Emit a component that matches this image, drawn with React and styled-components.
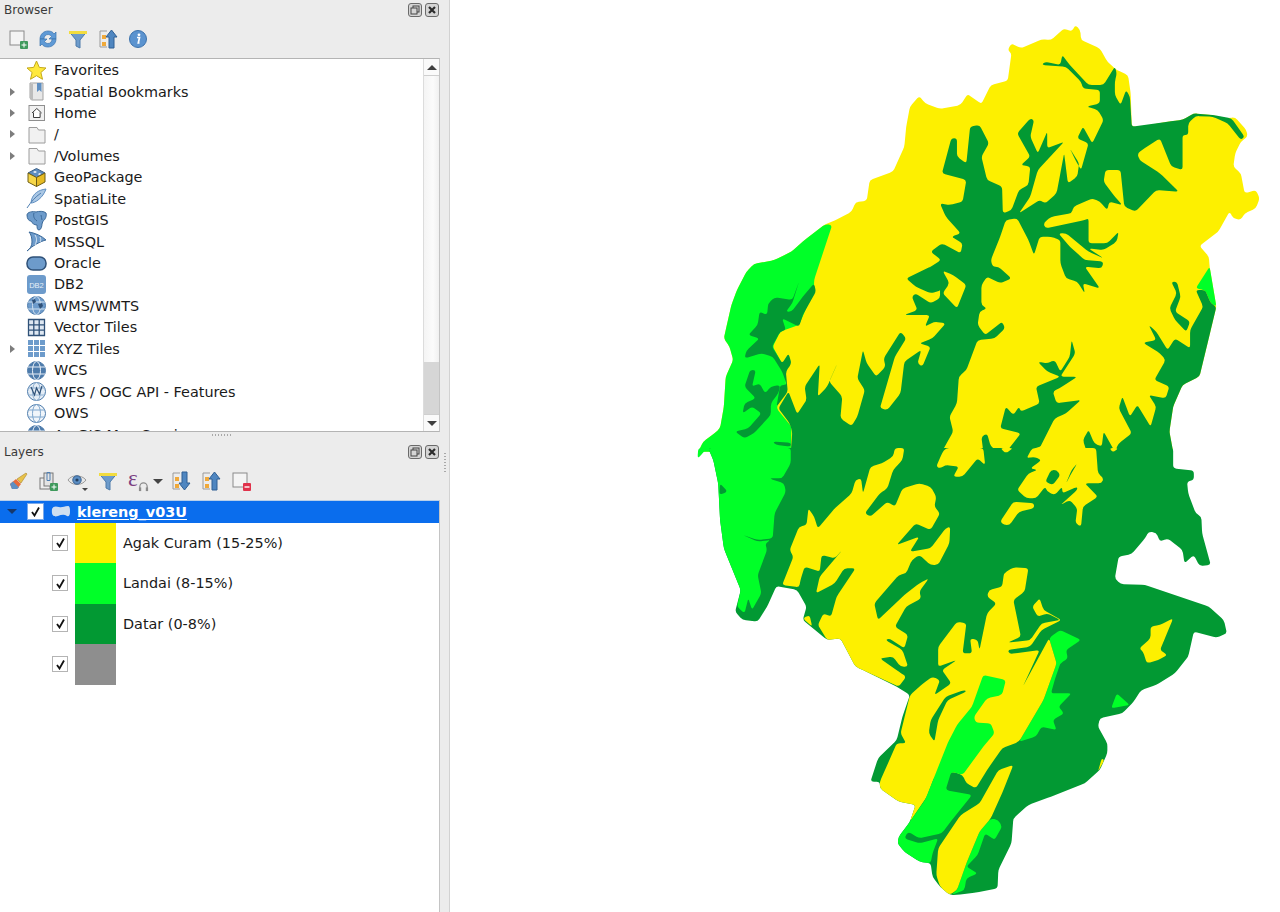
import React from "react";
import styled, { createGlobalStyle } from "styled-components";

const GlobalStyle = createGlobalStyle`
  html, body { margin: 0; padding: 0; background: #fff; }
  body { font-family: "DejaVu Sans", "Liberation Sans", sans-serif; color: #1c1c1c; }
`;

const YELLOW = "#fdf000";
const LIGHT = "#00ff28";
const DARK = "#029933";

/* ---------- layout ---------- */
const Page = styled.div`
  display: flex;
  width: 1280px;
  height: 912px;
  overflow: hidden;
`;

const Sidebar = styled.aside`
  position: relative;
  width: 449px;
  flex: none;
  display: flex;
  flex-direction: column;
  background: #ececec;
  border-right: 1px solid #d2d2d2;
`;

const Canvas = styled.main`
  flex: 1;
  background: #fff;
`;

const MapSvg = styled.svg`
  display: block;
  width: 830px;
  height: 912px;
`;

const TitleBar = styled.div`
  height: ${(p) => p.$h}px;
  padding-top: ${(p) => p.$top}px;
  box-sizing: border-box;
  display: flex;
  align-items: center;
  justify-content: space-between;
  padding-left: 4px;
  padding-right: 10px;
`;

const TitleText = styled.span`
  font-size: 12px;
  color: #3a3a3a;
`;

const DockButtons = styled.div`
  display: flex;
  gap: 3px;
`;

const DockButton = styled.svg`
  display: block;
  width: 14px;
  height: 14px;
`;

const Toolbar = styled.div`
  height: ${(p) => p.$h}px;
  padding-bottom: ${(p) => p.$pb || 0}px;
  box-sizing: border-box;
  display: flex;
  align-items: center;
  padding-left: 7px;
`;

const ToolButton = styled.div`
  width: ${(p) => p.$w || 30}px;
  flex: none;
  display: flex;
  justify-content: ${(p) => (p.$left ? "flex-start" : "center")};
  padding-right: ${(p) => (p.$left ? 0 : 8)}px;
  box-sizing: border-box;
`;

const ToolIcon = styled.svg`
  display: block;
  width: 22px;
  height: 22px;
`;

const EpsilonBox = styled.div`
  position: relative;
  width: 22px;
  height: 22px;
`;

const EpsilonGlyph = styled.span`
  position: absolute;
  left: 1px;
  top: -3px;
  font-size: 23px;
  line-height: 24px;
  color: #7c3f82;
  font-family: "Liberation Serif", serif;
`;

const Headset = styled.svg`
  position: absolute;
  left: 11px;
  top: 11px;
  width: 11px;
  height: 11px;
`;

const DropCaret = styled.div`
  width: 0;
  height: 0;
  border-top: 5px solid #444;
  border-left: 5px solid transparent;
  border-right: 5px solid transparent;
`;

const ListFrame = styled.div`
  position: relative;
  width: 440px;
  height: 374px;
  box-sizing: border-box;
  background: #fff;
  border-top: 1px solid #b4b4b4;
  border-bottom: 1px solid #b4b4b4;
  border-right: 1px solid #c4c4c4;
  display: flex;
`;

const BrowserRows = styled.div`
  flex: 1;
  overflow: hidden;
  padding-top: 0.4px;
`;

const BrowserRow = styled.div`
  height: 21.45px;
  display: flex;
  align-items: center;
  font-size: 14.4px;
  color: #1a1a1a;
  white-space: nowrap;
`;

const ArrowCell = styled.div`
  width: 26px;
  flex: none;
  display: flex;
  justify-content: center;
  padding-right: 2px;
  box-sizing: border-box;
`;

const RightArrow = styled.div`
  width: 0;
  height: 0;
  border-left: 5px solid #7d7d7d;
  border-top: 4.5px solid transparent;
  border-bottom: 4.5px solid transparent;
`;

const DownArrow = styled.div`
  width: 0;
  height: 0;
  border-top: 5px solid #17386b;
  border-left: 5px solid transparent;
  border-right: 5px solid transparent;
`;

const RowIcon = styled.svg`
  display: block;
  width: 21px;
  height: 21px;
  flex: none;
  margin-right: 7px;
`;

const Scrollbar = styled.div`
  width: 16px;
  flex: none;
  display: flex;
  flex-direction: column;
  border-left: 1px solid #dcdcdc;
  box-sizing: border-box;
  background: linear-gradient(90deg, #f4f4f4, #fbfbfb 60%, #f0f0f0);
`;

const ScrollEnd = styled.div`
  height: 17px;
  flex: none;
  display: flex;
  align-items: center;
  justify-content: center;
  background: #fafafa;
  border-${(p) => (p.$up ? "bottom" : "top")}: 1px solid #cfcfcf;
  box-sizing: border-box;
`;

const ArrowUp = styled.div`
  width: 0;
  height: 0;
  border-bottom: 5px solid #3f3f3f;
  border-left: 5px solid transparent;
  border-right: 5px solid transparent;
`;

const ArrowDown = styled.div`
  width: 0;
  height: 0;
  border-top: 5px solid #3f3f3f;
  border-left: 5px solid transparent;
  border-right: 5px solid transparent;
`;

const ScrollTrack = styled.div`
  flex: 1;
`;

const ScrollThumb = styled.div`
  height: 52px;
  flex: none;
  background: #d6d6d6;
`;

const HGrip = styled.div`
  position: absolute;
  left: 211px;
  top: 434px;
  width: 20px;
  height: 2px;
  background: radial-gradient(circle, #a8a8a8 0.8px, transparent 1px) 0 0 / 3px 2px;
`;

const VGrip = styled.div`
  position: absolute;
  left: 444px;
  top: 452px;
  width: 2px;
  height: 21px;
  background: radial-gradient(circle, #a8a8a8 0.8px, transparent 1px) 0 0 / 2px 3px;
`;

const LayerTree = styled.div`
  flex: 1;
  width: 440px;
  box-sizing: border-box;
  background: #fff;
  border-right: 1px solid #c4c4c4;
  border-top: 1px solid #b8cfe9;
`;

const LayerRow = styled.div`
  height: 21.7px;
  display: flex;
  align-items: center;
  background: #0a6ded;
`;

const LayerArrow = styled.div`
  width: 27px;
  flex: none;
  display: flex;
  justify-content: center;
  padding-right: 3px;
  box-sizing: border-box;
`;

const Check = styled.div`
  width: ${(p) => p.$size}px;
  height: ${(p) => p.$size}px;
  flex: none;
  box-sizing: border-box;
  background: #fff;
  border: 1px solid ${(p) => (p.$onBlue ? "#7aa9ea" : "#b4b4b4")};
  display: flex;
  align-items: center;
  justify-content: center;
`;

const CheckMark = styled.svg`
  display: block;
  width: 11px;
  height: 11px;
`;

const LayerShape = styled.svg`
  display: block;
  width: 20px;
  height: 14px;
  margin: 0 6px 0 7px;
  flex: none;
`;

const LayerName = styled.span`
  font-size: 14.4px;
  font-weight: 700;
  color: #fff;
  text-decoration: underline;
  text-underline-offset: 2px;
`;

const LegendRow = styled.div`
  height: 40.5px;
  display: flex;
  align-items: center;
  padding-left: 52px;
`;

const Swatch = styled.div`
  width: 41px;
  height: 100%;
  flex: none;
  margin: 0 7px 0 7px;
  background: ${(p) => p.$color};
`;

const LegendLabel = styled.span`
  font-size: 14.4px;
  color: #1a1a1a;
`;

/* ---------- small drawings ---------- */
const Globe = ({ fill = "#6d9bcb", line = "#fff", children }) => (
  <RowIcon viewBox="0 0 21 21">
    <circle cx="10.5" cy="10.5" r="9" fill={fill} stroke="#4d7bab" />
    <ellipse cx="10.5" cy="10.5" rx="4" ry="9" fill="none" stroke={line} />
    <path d="M2 7h17M2 14h17" stroke={line} fill="none" />
    {children}
  </RowIcon>
);

const Icons = {
  star: (
    <RowIcon viewBox="0 0 21 21">
      <path d="M10.5 1l2.8 6.4 6.7.6-5.1 4.5 1.6 6.8-6-3.6-6 3.6 1.6-6.8L1 8l6.7-.6z" fill="#ffe93b" stroke="#c4a91a" />
    </RowIcon>
  ),
  book: (
    <RowIcon viewBox="0 0 21 21">
      <path d="M4 2h13v17H5.500L4 17z" fill="#e8e8e8" stroke="#a3a3a3" />
      <path d="M4 3h3v16H5L4 17z" fill="#bcbcbc" />
      <path d="M11 2h4.500v9l-2.200-2-2.300 2z" fill="#5f8fc2" />
    </RowIcon>
  ),
  home: (
    <RowIcon viewBox="0 0 21 21">
      <rect x="3" y="3.500" width="15.500" height="15" fill="#f0f0f0" stroke="#8f8f8f" />
      <path d="M6 11l4.800-4.500 4.800 4.500M7.500 10.500V15.500h6.600v-5" fill="#fff" stroke="#3c3c3c" />
    </RowIcon>
  ),
  folder: (
    <RowIcon viewBox="0 0 21 21">
      <path d="M3 3.500h8l1.500 2.500H19v13H3z" fill="#f1f1f1" stroke="#9c9c9c" />
    </RowIcon>
  ),
  geopackage: (
    <RowIcon viewBox="0 0 21 21">
      <path d="M10.500 1.500l8.500 4.500-8.500 4.500L2 6z" fill="#5e8dc0" stroke="#3b5f86" />
      <path d="M2 6l8.500 4.500V19.500L2 15z" fill="#f6d648" stroke="#6f5e14" />
      <path d="M19 6l-8.500 4.500V19.500L19 15z" fill="#e6bb25" stroke="#6f5e14" />
      <path d="M7 5l2-1 2 1-2 1zM12 7l2-1 1 1-2 1z" fill="#fff" />
    </RowIcon>
  ),
  feather: (
    <RowIcon viewBox="0 0 21 21">
      <path d="M20 1C12 2 7 6 5.500 12L5 15C9 15 17 10 20 1z" fill="#aac7e4" stroke="#5f8fc2" />
      <path d="M1 20C5 14 9 9 15 5" fill="none" stroke="#4f7fb2" />
    </RowIcon>
  ),
  elephant: (
    <RowIcon viewBox="0 0 21 21">
      <path d="M1 5c0-3 6-4 9-3 3-1 8-1 10 1 1 3-1 7-3 8l-1 3c0 2-1 6-3 6-2 0-2-3-2-5-3 0-5-2-6-4-2 0-4-2-4-6z" fill="#6d9bcb" stroke="#3c6a9a" />
      <path d="M8 3c-1 3 0 6 3 8M15 5c0 2 1 3 1 5" fill="none" stroke="#3c6a9a" />
    </RowIcon>
  ),
  sail: (
    <RowIcon viewBox="0 0 21 21">
      <path d="M1 20C4 18 6 15 6 11S5 3 3 1c6 1 13 4 17 8-5 1-14 6-19 11z" fill="#6d9bcb" stroke="#3c6a9a" />
      <path d="M9 4c2 3 2 6 0 10M14 6c1 2 1 3 0 5" fill="none" stroke="#dbe8f5" />
    </RowIcon>
  ),
  oracle: (
    <RowIcon viewBox="0 0 21 21">
      <rect x="1" y="4" width="19" height="13" rx="6" fill="#6d9bcb" stroke="#2f5178" strokeWidth="1.500" />
    </RowIcon>
  ),
  db2: (
    <RowIcon viewBox="0 0 21 21">
      <rect x="1" y="1" width="19" height="19" rx="3" fill="#6d9bcb" />
      <text x="10.500" y="13.500" fontSize="7.500" fill="#e8f0f8" textAnchor="middle" fontFamily="Liberation Sans">DB2</text>
    </RowIcon>
  ),
  wms: (
    <Globe fill="#6d9bcb" line="#cfe0f0">
      <path d="M6 5l3-1 1 3-3 2zM12 9l4-1 1 3-3 3z" fill="#2f5178" />
    </Globe>
  ),
  vector: (
    <RowIcon viewBox="0 0 21 21">
      <path d="M2.500 2.500h16v16h-16zM2.500 7.800h16M2.500 13.200h16M7.800 2.500v16M13.200 2.500v16" fill="#dfe8f2" stroke="#2f5178" strokeWidth="1.300" />
    </RowIcon>
  ),
  xyz: (
    <RowIcon viewBox="0 0 21 21">
      {[2, 8, 14].flatMap((y) =>
        [2, 8, 14].map((x) => <rect key={`${x}-${y}`} x={x} y={y} width="5" height="5" fill="#6d9bcb" />)
      )}
    </RowIcon>
  ),
  wcs: <Globe fill="#4d7bab" line="#e6eef7" />,
  wfs: (
    <Globe fill="#e4edf6" line="#8fb0d1">
      <path d="M5 6l3.500 8 2-7 3 6 2.500-8" fill="none" stroke="#2f5178" strokeWidth="1.200" />
    </Globe>
  ),
  ows: <Globe fill="#f0f5fa" line="#7ea6cd" />,
};

const DockFloat = () => (
  <DockButton viewBox="0 0 14 14">
    <rect x=".5" y=".5" width="13" height="13" rx="2.500" fill="#d5d5d5" stroke="#6a6a6a" />
    <rect x="5" y="3" width="6" height="6" fill="none" stroke="#444" />
    <rect x="3" y="5" width="6" height="6" fill="#d5d5d5" stroke="#444" />
  </DockButton>
);

const DockClose = () => (
  <DockButton viewBox="0 0 14 14">
    <rect x=".5" y=".5" width="13" height="13" rx="2.500" fill="#d5d5d5" stroke="#6a6a6a" />
    <path d="M4 4l6 6M10 4l-6 6" stroke="#2c2c2c" strokeWidth="2.200" />
  </DockButton>
);

const Funnel = () => (
  <ToolIcon viewBox="0 0 22 22">
    <path d="M2.500 4h17l-6.500 8v8l-4-2v-6z" fill="#6d9bcb" stroke="#4c7aaa" />
    <rect x="2" y="3" width="18" height="3" fill="#f2dc3f" />
  </ToolIcon>
);

const TreeArrow = ({ down }) => (
  <ToolIcon viewBox="0 0 22 22">
    <path d="M3 3h7M3 3v16h7" fill="none" stroke="#9a9a9a" />
    <rect x="5" y="7" width="4" height="4" fill="#f0a93a" />
    <rect x="5" y="14" width="4" height="4" fill="#f0a93a" />
    {down ? (
      <path d="M12 2h5v11h3l-5.500 7L9 13h3z" fill="#4f86c0" stroke="#2f5f94" />
    ) : (
      <path d="M12 20h5V9h3l-5.500-7L9 9h3z" fill="#4f86c0" stroke="#2f5f94" />
    )}
  </ToolIcon>
);

const browserTools = [
  <ToolIcon viewBox="0 0 22 22" key="add">
    <rect x="3" y="3" width="14" height="14" fill="#f4f4f4" stroke="#8a8a8a" />
    <rect x="13" y="13" width="8" height="8" rx="1" fill="#3f9a5c" />
    <path d="M17 14.500v5M14.500 17h5" stroke="#fff" />
  </ToolIcon>,
  <ToolIcon viewBox="0 0 22 22" key="refresh">
    <path d="M3 11C3 6 7 3 11 3c3 0 5 1 6 3l2-2v7h-7l2.500-2.500C13.500 7 12 6.500 11 6.500c-2.500 0-4 2-4 4.500z" fill="#5f9ad6" stroke="#3b72ad" strokeWidth=".7" />
    <path d="M19 11c0 5-4 8-8 8-3 0-5-1-6-3l-2 2v-7h7l-2.500 2.500c1 1.500 2.500 2 3.500 2 2.500 0 4-2 4-4.500z" fill="#5f9ad6" stroke="#3b72ad" strokeWidth=".7" />
  </ToolIcon>,
  <Funnel key="filter" />,
  <TreeArrow key="collapse" />,
  <ToolIcon viewBox="0 0 22 22" key="info">
    <circle cx="11" cy="11" r="8.500" fill="#5b93cf" stroke="#3b72ad" />
    <circle cx="12" cy="6.800" r="1.400" fill="#fff" />
    <path d="M10 9.500h2.500l-1.200 5.500h1.200" fill="none" stroke="#fff" strokeWidth="1.700" />
  </ToolIcon>,
];

const BROWSER_ITEMS = [
  ["Favorites", "star", false],
  ["Spatial Bookmarks", "book", true],
  ["Home", "home", true],
  ["/", "folder", true],
  ["/Volumes", "folder", true],
  ["GeoPackage", "geopackage", false],
  ["SpatiaLite", "feather", false],
  ["PostGIS", "elephant", false],
  ["MSSQL", "sail", false],
  ["Oracle", "oracle", false],
  ["DB2", "db2", false],
  ["WMS/WMTS", "wms", false],
  ["Vector Tiles", "vector", false],
  ["XYZ Tiles", "xyz", true],
  ["WCS", "wcs", false],
  ["WFS / OGC API - Features", "wfs", false],
  ["OWS", "ows", false],
  ["ArcGIS Map Service", "wcs", false],
];

const LEGEND = [
  ["Agak Curam (15-25%)", YELLOW],
  ["Landai (8-15%)", LIGHT],
  ["Datar (0-8%)", DARK],
  ["", "#8e8e8e"],
];

const CheckIcon = () => (
  <CheckMark viewBox="0 0 11 11">
    <path d="M2 6l2.500 3.500L9 1.500" fill="none" stroke="#111" strokeWidth="1.800" />
  </CheckMark>
);

/* ---------- map shapes, traced in two strips (upper and lower half) ---------- */
const UPPER_OUTLINE = "268,1325 22,1325 35,1295 65,1270 80,1255 90,1190 95,1100 115,1050 105,1010 90,985 100,935 110,885 125,840 150,785 170,762 225,750 270,725 305,690 360,642 385,632 430,605 440,577 470,572 478,510 540,485 570,410 575,350 585,290 610,258 625,280 665,297 720,285 738,252 775,282 800,225 845,212 855,130 845,120 855,100 880,115 935,88 960,90 995,55 1015,65 1025,45 1038,60 1040,90 1090,115 1110,155 1135,180 1165,195 1172,250 1175,350 1200,350 1270,335 1310,330 1340,310 1390,315 1420,325 1450,322 1480,360 1483,380 1465,395 1450,430 1445,470 1465,490 1475,550 1505,540 1515,565 1505,595 1475,610 1465,630 1445,625 1435,605 1405,665 1355,708 1380,740 1382,770 1400,890 1385,960 1355,1100 1310,1125 1285,1190 1275,1265 1285,1325";

const UPPER_LIGHT = "22,1325 35,1295 65,1270 80,1255 90,1190 95,1100 115,1050 105,1010 90,985 100,935 110,885 125,840 150,785 170,762 225,750 270,725 305,690 360,642 378,645 330,810 330,840 290,945 240,965 220,1010 255,1080 255,1130 230,1195 270,1250 268,1325";

const UPPER_EAST_LIGHT = "1382,770 1345,835 1370,840 1385,880 1400,890";

const UPPER_DARK = [
  // western branches over the light green
  "290,815 272,870 225,862 208,880 205,915 185,905 180,945 155,975 185,985 150,1022 145,1045 190,1030 220,1040 245,1085 258,1125 240,1125 230,1190 260,1145 255,1085 270,1060 262,1030 245,1060 218,1010 240,965 255,960 245,925 290,950 300,915 335,845 330,820 300,860 270,905 255,905 272,880",
  "160,1080 175,1080 165,1130 185,1120 200,1150 215,1130 240,1125 235,1150 215,1180 215,1215 170,1270 145,1285 120,1265 155,1255 190,1210 165,1190 140,1210 145,1180 175,1165 145,1130",
  "220,1295 268,1298 268,1310 228,1305",
  // trunk with the long northern branches
  "268,1325 272,1265 265,1240 235,1195 262,1145 285,1212 310,1170 305,1130 345,1062 340,1160 365,1130 392,1060 370,1115 405,1160 400,1225 430,1248 445,1220 465,1140 445,1105 460,1020 470,1060 495,1100 520,1070 515,1045 560,965 575,985 545,1040 505,1195 525,1200 560,1150 570,1055 615,1020 605,1060 618,1070 640,1010 610,1000 645,985 680,940 650,935 625,950 638,915 570,915 605,900 590,860 600,850 640,880 665,865 665,815 640,770 575,805 640,770 668,750 640,725 670,700 720,730 725,700 695,680 720,670 680,620 665,580 690,585 725,575 735,510 670,490 695,385 710,385 710,440 735,460 745,350 770,345 795,400 775,440 790,510 830,530 832,610 855,600 875,540 900,525 905,470 880,465 905,440 870,370 905,325 915,330 905,380 925,430 950,365 950,415 995,395 925,480 905,560 875,610 930,570 945,580 975,550 985,490 995,430 1005,520 1030,500 1035,460 1010,415 1025,450 1040,480 1060,400 1030,385 1045,350 1070,400 1100,330 1085,300 1055,290 1090,280 1090,240 1045,235 1040,215 1000,170 935,165 945,155 985,165 990,135 1010,165 1060,225 1100,225 1130,170 1135,190 1130,215 1130,255 1145,285 1160,240 1170,260 1175,350 1270,335 1310,330 1340,310 1390,315 1440,325 1475,380 1465,390 1430,340 1390,320 1345,318 1325,340 1325,375 1310,375 1310,480 1280,470 1250,385 1215,410 1190,430 1195,450 1250,490 1300,545 1240,540 1185,605 1155,590 1145,480 1105,480 1100,515 1130,560 1150,585 1115,575 1110,600 1090,575 1070,565 1020,590 1015,610 960,620 940,640 945,655 1050,630 1060,625 1060,700 1110,700 1140,665 1135,695 1100,720 1060,715 1100,745 1060,725 1000,670 980,670 1010,710 1050,750 1100,755 1095,775 1050,770 1090,835 1045,820 1050,850 1030,815 1000,805 985,760 985,690 960,680 930,680 915,735 900,690 870,625 840,630 825,680 800,750 805,770 820,770 855,805 825,820 790,800 775,825 775,885 790,895 770,905 765,945 785,975 830,935 838,955 810,985 765,990 735,1080 715,1100 710,1180 690,1220 700,1265 670,1325",
  "575,805 640,770 668,775 670,840 640,850 600,830",
  // south east mass
  "1285,1325 1275,1265 1285,1190 1310,1125 1355,1100 1385,960 1400,890 1385,880 1370,840 1345,840 1365,890 1330,960 1330,1015 1290,985 1270,1020 1240,965 1220,945 1240,990 1205,998 1250,1030 1265,1050 1235,1110 1275,1130 1265,1165 1220,1155 1240,1190 1225,1250 1190,1185 1170,1220 1150,1160 1140,1195 1175,1270 1140,1300 1130,1325",
  "1280,815 1295,815 1305,860 1290,905 1330,935 1320,965 1290,930 1275,895 1295,850",
  // tree in the middle of the yellow
  "1015,990 1025,1030 985,1100 1030,1100 990,1130 965,1145 975,1180 1040,1170 1000,1210 970,1225 925,1325 780,1325 775,1280 790,1270 800,1310 835,1335 880,1270 825,1255 840,1190 860,1215 875,1190 880,1205 930,1180 920,1130 985,1100 950,1085 925,1055 950,1060 970,1050 985,1085 1010,1040",
  "1130,1325 1100,1265 1095,1310 1075,1300 1060,1260 1045,1290 1055,1325",
];

const UPPER_YELLOW_ISLANDS = [
  "672,782 700,795 735,825 710,895 672,850 690,820",
  "895,1325 930,1310 975,1285 985,1300 950,1325",
];

const LOWER_OUTLINE = "48,-6 1285,-6 1285,55 1340,62 1340,90 1322,95 1325,130 1345,190 1360,200 1362,250 1385,345 1355,348 1340,315 1315,340 1310,300 1270,265 1250,275 1240,248 1220,245 1210,265 1175,312 1140,320 1130,385 1145,402 1210,405 1380,470 1420,510 1428,550 1400,563 1340,545 1325,620 1290,670 1240,705 1200,720 1180,755 1150,790 1090,805 1085,830 1110,880 1110,910 1090,960 1050,1000 960,1040 900,1065 860,1105 855,1180 820,1260 818,1315 760,1328 710,1335 690,1335 665,1310 645,1280 640,1240 610,1235 570,1205 552,1180 555,1160 585,1115 600,1065 555,1055 505,1015 505,995 480,995 500,925 550,870 565,800 585,735 550,710 460,660 440,650 400,565 365,570 300,510 310,470 285,420 230,408 205,470 180,515 140,510 120,485 135,420 90,295 80,210 75,100 62,30";

const LOWER_LIGHT = [
  "20,25 22,-6 45,-6 30,15",
  "48,-6 268,-6 268,40 245,85 210,85 250,100 255,125 225,190 220,265 180,270 140,255 180,275 215,270 200,280 205,300 180,375 190,430 165,480 155,445 145,490 125,470 135,420 90,295 80,210 75,100 62,30",
  "985,540 1040,570 1000,600 1005,625 985,640 970,690 960,730 1015,730 980,770 995,790 965,810 975,840 935,830 920,860 875,875 940,750 975,640 955,565 965,555",
  "1135,730 1170,765 1120,775",
  "820,1110 830,1130 810,1170 785,1150 765,1215 735,1250 765,1270 735,1285 730,1320 695,1335 710,1320 735,1240 770,1145 800,1105",
];

const LOWER_YELLOW = [
  "570,-6 565,30 540,60 525,115 505,130 465,190 480,200 525,155 545,170 565,115 610,100 640,110 655,140 650,170 665,190 640,240 600,220 550,285 610,260 585,305 640,295 680,235 692,230 690,280 660,345 640,345 610,315 590,330 575,370 555,375 490,460 500,510 570,435 610,400 635,385 610,425 615,445 575,470 545,530 580,555 570,595 530,565 520,570 565,600 580,650 560,650 540,620 505,625 555,665 575,680 555,710 460,660 440,650 400,565 365,570 340,525 355,490 375,500 390,440 440,355 410,355 385,400 335,430 345,380 405,300 385,325 350,315 345,365 305,350 295,385 290,412 245,405 275,320 265,300 290,230 310,225 315,175 330,200 340,235 385,175 430,130 440,90 455,85 460,130 480,50 510,40 540,20 545,-6",
  "300,505 318,495 325,530",
  "655,50 670,10 680,-6 780,-6 785,45 765,25 725,80 700,80 715,50 680,45 665,55",
  "910,-6 1080,-6 1085,70 1100,85 1095,100 1050,100 1085,140 1045,170 1040,230 1025,220 1030,175 1010,150 985,165 1030,120 1030,110 990,130 990,110 970,135 950,125 945,110 920,145 895,145 870,120 900,70 925,60 905,55 935,30 915,20 895,25",
  "825,-6 860,-6 840,10",
  "1115,-6 1140,-6 1125,8",
  "825,215 860,155 915,160 915,175 875,185 850,225 835,225",
  "1285,505 1265,560 1250,600 1270,615 1245,630 1215,640 1205,605 1195,595 1225,565 1225,530 1250,525",
  "660,590 710,515 735,520 725,610 750,610 745,565 765,570 770,600 790,490 815,460 790,440 795,420 830,410 835,370 860,352 900,355 890,425 860,450 880,560 845,578 905,570 935,520 985,510 950,490 925,500 910,470 930,445 940,480 988,510 935,540 905,590 845,600 850,612 930,600 885,710 955,565 975,640 940,750 875,875 830,895 790,960 760,1015 735,1000 725,975 700,965 650,980 630,1040 585,1115 600,1065 555,1055 505,1015 505,995 550,880 575,880 560,850 585,735 620,700 645,680 665,690 650,735 695,700 670,660 710,630 660,650",
  "860,945 830,1030 800,1105 770,1145 735,1240 710,1320 690,1335 665,1310 655,1275 660,1195 720,1095 770,1060 820,960",
  "1095,925 1102,930 1085,965",
];

const LOWER_LIGHT_BAND = "780,675 840,690 830,735 790,745 755,800 760,818 800,820 810,850 780,890 725,975 695,965 680,1020 750,1035 700,1105 670,1150 610,1165 580,1145 570,1165 610,1180 660,1165 645,1210 640,1240 610,1235 570,1205 552,1180 555,1160 585,1115 625,1050 650,980 685,880 710,825 750,770";

const LOWER_DARK = [
  "730,720 680,740 640,810 635,850 650,875 660,810 685,750 735,725",
  "1030,40 1015,60 1000,100 1012,75",
  "960,60 945,95 965,105 985,75 975,60",
  "80,100 100,125 78,135",
];

// rounds every corner of a traced polygon so the edges don't look cut with a ruler
const soften = (points, r = 9) => {
  const pts = points.split(" ").map((p) => p.split(",").map(Number));
  const toward = (from, to) => {
    const d = Math.hypot(to[0] - from[0], to[1] - from[1]) || 1;
    const k = Math.min(r, d / 2) / d;
    return [from[0] + (to[0] - from[0]) * k, from[1] + (to[1] - from[1]) * k];
  };
  let d = "";
  pts.forEach((cur, i) => {
    const a = toward(cur, pts[(i - 1 + pts.length) % pts.length]);
    const b = toward(cur, pts[(i + 1) % pts.length]);
    d += `${i ? "L" : "M"}${a[0]} ${a[1]}Q${cur[0]} ${cur[1]} ${b[0]} ${b[1]}`;
  });
  return d + "Z";
};

const Shape = ({ points, fill }) => <path d={soften(points)} fill={fill} />;

const MapShapes = () => (
  <MapSvg viewBox="450 0 830 912">
    <g transform="translate(690 10) scale(.376 .33333)">
      <Shape points={UPPER_OUTLINE} fill={YELLOW} />
      <Shape points={UPPER_LIGHT} fill={LIGHT} />
      <Shape points={UPPER_EAST_LIGHT} fill={LIGHT} />
      {UPPER_DARK.map((p) => (
        <Shape key={p} points={p} fill={DARK} />
      ))}
      {UPPER_YELLOW_ISLANDS.map((p) => (
        <Shape key={p} points={p} fill={YELLOW} />
      ))}
    </g>
    <g transform="translate(690 450) scale(.376 .33333)">
      <Shape points={LOWER_OUTLINE} fill={DARK} />
      {LOWER_LIGHT.map((p) => (
        <Shape key={p} points={p} fill={LIGHT} />
      ))}
      {LOWER_YELLOW.map((p) => (
        <Shape key={p} points={p} fill={YELLOW} />
      ))}
      <Shape points={LOWER_LIGHT_BAND} fill={LIGHT} />
      {LOWER_DARK.map((p) => (
        <Shape key={p} points={p} fill={DARK} />
      ))}
    </g>
  </MapSvg>
);

const App = () => {
  return (
    <Page>
      <GlobalStyle />
      <Sidebar>
        <TitleBar $h={20} $top={0}>
          <TitleText>Browser</TitleText>
          <DockButtons>
            <DockFloat />
            <DockClose />
          </DockButtons>
        </TitleBar>
        <Toolbar $h={38}>
          {browserTools.map((t) => (
            <ToolButton key={t.key}>{t}</ToolButton>
          ))}
        </Toolbar>
        <ListFrame>
          <BrowserRows>
            {BROWSER_ITEMS.map(([label, icon, expandable]) => (
              <BrowserRow key={label}>
                <ArrowCell>{expandable && <RightArrow />}</ArrowCell>
                {Icons[icon]}
                {label}
              </BrowserRow>
            ))}
          </BrowserRows>
          <Scrollbar>
            <ScrollEnd $up>
              <ArrowUp />
            </ScrollEnd>
            <ScrollTrack />
            <ScrollThumb />
            <ScrollEnd>
              <ArrowDown />
            </ScrollEnd>
          </Scrollbar>
        </ListFrame>
        <HGrip />
        <VGrip />
        <TitleBar $h={36} $top={4}>
          <TitleText>Layers</TitleText>
          <DockButtons>
            <DockFloat />
            <DockClose />
          </DockButtons>
        </TitleBar>
        <Toolbar $h={32} $pb={6}>
          <ToolButton>
            <ToolIcon viewBox="0 0 22 22">
              <path d="M3 14l6-5 5 5-4 5H5z" fill="#e86a3a" />
              <path d="M3 14l3-2.500 6 6L10 19H5z" fill="#5f8fc2" />
              <path d="M10 9l9-6 1 1-6 9z" fill="#e8c24a" stroke="#a9852a" strokeWidth=".6" />
            </ToolIcon>
          </ToolButton>
          <ToolButton>
            <ToolIcon viewBox="0 0 22 22">
              <rect x="3" y="8" width="10" height="11" fill="#eee" stroke="#777" />
              <rect x="7" y="3" width="9" height="13" fill="#e4e4e4" stroke="#777" />
              <path d="M10 2.500h3v8h-3z" fill="none" stroke="#4f7fb2" />
              <rect x="13" y="13" width="8" height="8" rx="1" fill="#3f9a5c" />
              <path d="M17 14.500v5M14.500 17h5" stroke="#fff" />
            </ToolIcon>
          </ToolButton>
          <ToolButton>
            <ToolIcon viewBox="0 0 22 22">
              <path d="M1 10c3-5 13-6 18 0-4 6-14 6-18 0z" fill="#e8e8e8" stroke="#9a9a9a" />
              <circle cx="10" cy="10" r="4.200" fill="#5b8ec4" stroke="#38618f" />
              <circle cx="10" cy="10" r="1.600" fill="#24405f" />
              <path d="M15 18h6l-3 3z" fill="#444" />
            </ToolIcon>
          </ToolButton>
          <ToolButton>
            <Funnel />
          </ToolButton>
          <ToolButton $w={26} $left>
            <EpsilonBox>
              <EpsilonGlyph>ε</EpsilonGlyph>
              <Headset viewBox="0 0 12 12">
                <path d="M2 9V6a4 4 0 0 1 8 0v3" fill="none" stroke="#8b8b8b" strokeWidth="1.300" />
                <rect x="1" y="7" width="2.500" height="4" fill="#8b8b8b" />
                <rect x="8.500" y="7" width="2.500" height="4" fill="#8b8b8b" />
              </Headset>
            </EpsilonBox>
          </ToolButton>
          <ToolButton $w={17} $left>
            <DropCaret />
          </ToolButton>
          <ToolButton>
            <TreeArrow down />
          </ToolButton>
          <ToolButton>
            <TreeArrow />
          </ToolButton>
          <ToolButton>
            <ToolIcon viewBox="0 0 22 22">
              <rect x="3" y="3" width="14" height="14" fill="#f4f4f4" stroke="#8a8a8a" />
              <rect x="13" y="13" width="8" height="8" rx="1" fill="#e0324b" />
              <path d="M14.500 17h5" stroke="#fff" strokeWidth="1.400" />
            </ToolIcon>
          </ToolButton>
        </Toolbar>
        <LayerTree>
          <LayerRow>
            <LayerArrow>
              <DownArrow />
            </LayerArrow>
            <Check $size={17} $onBlue>
              <CheckIcon />
            </Check>
            <LayerShape viewBox="0 0 20 14">
              <path d="M1 4c1-3 4-3 7-2 3 1 5-1 9-1 2 0 2 3 2 6s-1 5-3 4c-3-2-6-1-9 0-3 1-7 1-6-7z" fill="#cfdff0" />
            </LayerShape>
            <LayerName>klereng_v03U</LayerName>
          </LayerRow>
          {LEGEND.map(([label, color]) => (
            <LegendRow key={color}>
              <Check $size={16}>
                <CheckIcon />
              </Check>
              <Swatch $color={color} />
              <LegendLabel>{label}</LegendLabel>
            </LegendRow>
          ))}
        </LayerTree>
      </Sidebar>
      <Canvas>
        <MapShapes />
      </Canvas>
    </Page>
  );
};

export default App;
